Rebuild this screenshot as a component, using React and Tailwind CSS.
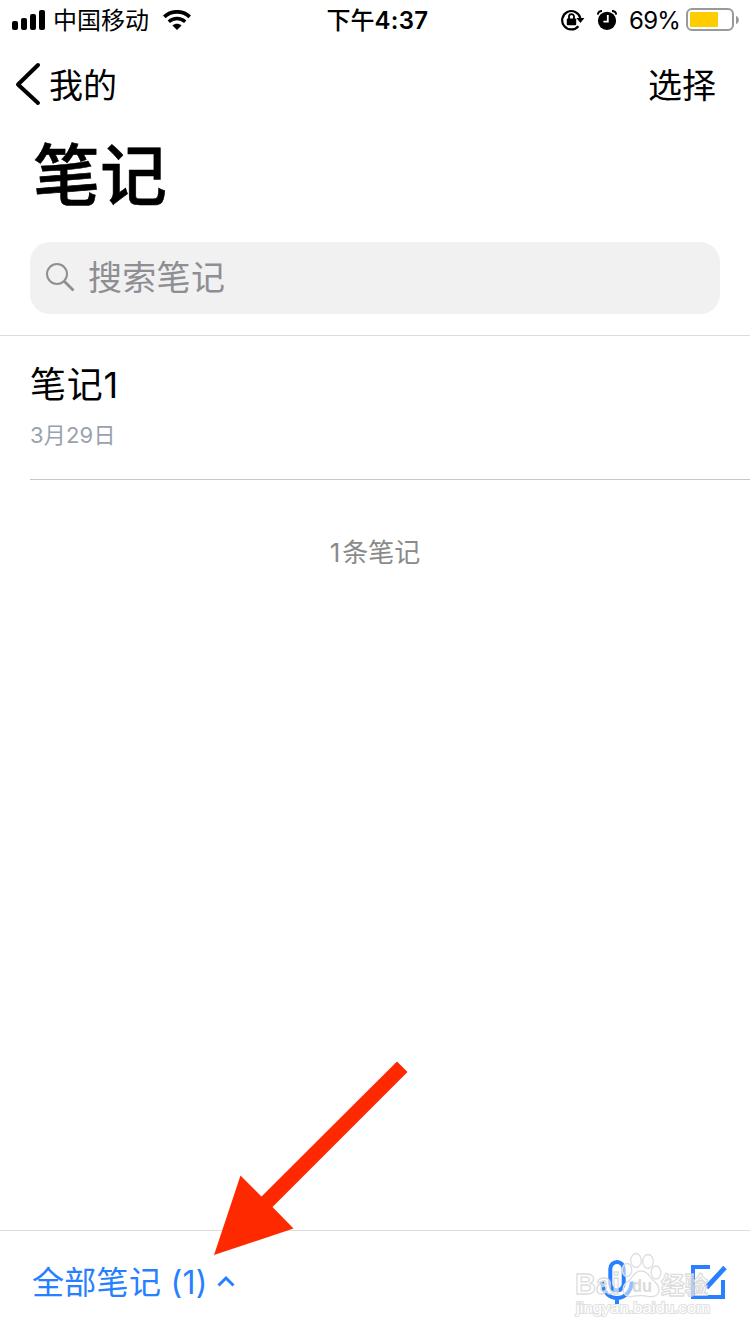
import React, { useState } from "react";

const notesMock = [{ id: 1, title: "笔记1", date: "3月29日" }];

const StatusBar = () => {
  return (
    <div className="h-10 shrink-0 pt-px flex flex-row items-center justify-between pl-3 pr-[11px] text-2xl leading-10">
      <div className="w-[280px] flex flex-row items-center">
        <svg width="33" height="20" viewBox="0 0 33 20" className="shrink-0 mb-0.5">
          <rect x="0" y="11" width="6" height="9" rx="2" />
          <rect x="9" y="8" width="6" height="12" rx="2" />
          <rect x="18" y="4" width="6" height="16" rx="2" />
          <rect x="27" y="0" width="6" height="20" rx="2" />
        </svg>
        <span className="ml-2">中国移动</span>
        <svg width="28" height="20" viewBox="0 0 28 20" className="ml-[14px] mb-0.5">
          <path d="M1.3 6.8C8.5 0.2 19.5 0.2 26.7 6.8" fill="none" stroke="black" strokeWidth="3.8" />
          <path d="M5.8 11.8C10.6 7.4 17.4 7.4 22.2 11.8" fill="none" stroke="black" strokeWidth="3.4" />
          <path d="M14 20L9.4 15.6C12 13 16 13 18.6 15.6Z" />
        </svg>
      </div>
      <div className="ml-1 font-semibold tracking-[0.3px]">
        <span className="font-medium tracking-normal">下午</span>4:37
      </div>
      <div className="w-[280px] flex flex-row items-center justify-end">
        <svg width="24" height="22" viewBox="0 0 24 22" className="mr-3 mb-px">
          <path d="M17.4 17.2A9.2 9.2 0 1 1 19.3 9" fill="none" stroke="black" strokeWidth="2.2" />
          <path d="M15.4 9H23.4L19.4 14Z" />
          <rect x="5.8" y="9.4" width="9.4" height="6.8" rx="1" />
          <path d="M8 10.4V7.6a2.5 2.5 0 0 1 5 0V10.4" fill="none" stroke="black" strokeWidth="1.8" />
        </svg>
        <svg width="20" height="20" viewBox="0 0 20 20" className="mr-3 mb-0.5">
          <circle cx="10" cy="10.8" r="9.1" />
          <path d="M10.8 5V11.6H6.4" fill="none" stroke="white" strokeWidth="1.8" />
          <path d="M0.8 4.6C1 2.4 2.6 1 5 0.9M19.2 4.6C19 2.4 17.4 1 15 0.9" fill="none" stroke="black" strokeWidth="2" />
        </svg>
        <span className="tracking-[-0.8px]">69%</span>
        <svg width="53" height="24" viewBox="0 0 53 24" className="ml-1.5 shrink-0 mb-px">
          <rect x="1" y="1" width="46" height="21" rx="5" fill="none" stroke="#999" strokeWidth="2" />
          <rect x="4" y="4" width="28" height="15" rx="1" fill="#ffcc00" />
          <path d="M50 8C53.8 9 53.8 15 50 16Z" fill="#999" />
        </svg>
      </div>
    </div>
  );
};

const NoteItem = ({ title, date }) => {
  return (
    <div className="h-36 ml-[30px] pt-[25px] border-b border-[#c8c8c8] flex flex-col">
      <div className="text-[36px] leading-[48px] tracking-[0.8px]">{title}</div>
      <div className="mt-2.5 text-[22px] leading-8 tracking-[0.2px] text-[#99a1af]">
        {date}
      </div>
    </div>
  );
};

const Arrow = () => {
  return (
    <svg
      className="absolute left-[200px] top-[1050px] pointer-events-none"
      width="220"
      height="220"
      viewBox="0 0 220 220"
    >
      <path
        d="M197 11.5L207.5 22L72.5 157L93.5 178.5L14 205L40.5 125.5L61.5 146.5Z"
        fill="#ff2900"
      />
    </svg>
  );
};

const Watermark = () => {
  return (
    <svg
      className="absolute left-[570px] top-[1248px] pointer-events-none font-['Liberation_Sans','Noto_Sans_CJK_SC',sans-serif]"
      width="150"
      height="76"
      viewBox="0 0 150 76"
    >
      <g fill="white" fillOpacity="0.5" stroke="#dedede" strokeWidth="1.3">
        <ellipse cx="66" cy="12.5" rx="5.3" ry="7" />
        <ellipse cx="78" cy="13.5" rx="5.3" ry="7" />
        <ellipse cx="57" cy="22" rx="4.8" ry="6.5" />
        <ellipse cx="86" cy="24.5" rx="4.8" ry="6.5" />
        <path d="M71 23C63 23 63 31 57 34C50 40 53 49 61 48.5C65 48 67 47.5 71 47.5C75 47.5 79 49 83 48.5C91 47 90 39 85 34C79 30 79 23 71 23Z" />
      </g>
      <g fontWeight="700">
        <g fill="white" fillOpacity="0.6" stroke="#d4d4d4" strokeOpacity="0.8" strokeWidth="1.3">
          <text x="5" y="45.5" fontSize="29" textLength="45" lengthAdjust="spacingAndGlyphs">Bai</text>
          <text x="91" y="45.5" fontSize="24" textLength="47" lengthAdjust="spacingAndGlyphs">经验</text>
        </g>
        <text x="62" y="44" fontSize="18" textLength="20" lengthAdjust="spacingAndGlyphs" fill="#dadada">du</text>
      </g>
      <text
        x="6"
        y="64.5"
        fontSize="15.5"
        textLength="134"
        lengthAdjust="spacingAndGlyphs"
        fill="white"
        stroke="#e0e0e0"
        strokeWidth="2"
        paintOrder="stroke"
      >
        jingyan.baidu.com
      </text>
    </svg>
  );
};

const App = () => {
  const [notes] = useState(notesMock);
  const [search, setSearch] = useState("");

  return (
    <div className="relative w-[750px] h-[1334px] overflow-hidden bg-white text-black flex flex-col font-[Inter,'Noto_Sans_CJK_SC',sans-serif]">
      <StatusBar />
      <div className="h-[88px] shrink-0 flex flex-row items-center justify-between pl-[15px] pr-[34px] text-[34px]">
        <div className="flex flex-row items-center cursor-pointer">
          <svg width="26" height="44" viewBox="0 0 26 44" fill="none" stroke="black" strokeWidth="4" strokeLinecap="round" strokeLinejoin="round">
            <path d="M23 3L3 22.5L23 41" />
          </svg>
          <span className="ml-2 pt-0.5">我的</span>
        </div>
        <div className="pt-0.5 cursor-pointer">选择</div>
      </div>
      <div className="h-[114px] shrink-0 pl-[33px] pt-0.5 text-[67px] leading-[92px] font-medium [-webkit-text-stroke:0.6px_black]">
        笔记
      </div>
      <div className="h-[94px] shrink-0 px-[30px] border-b border-[#dcdcdc]">
        <label className="h-[72px] rounded-[20px] bg-[#f1f1f1] flex flex-row items-center pl-4 pb-0.5">
          <svg width="29" height="29" viewBox="0 0 29 29" fill="none" stroke="#8e8e93">
            <circle cx="11" cy="11" r="10" strokeWidth="2" />
            <path d="M18.5 18.5L27.5 27.5" strokeWidth="2.8" />
          </svg>
          <input
            className="ml-[13px] w-[500px] h-12 bg-transparent outline-none text-[34px] tracking-[0.3px] placeholder:text-[#8e8e93]"
            type="text"
            value={search}
            onChange={(e) => setSearch(e.target.value)}
            placeholder="搜索笔记"
          />
        </label>
      </div>
      <div className="flex-1">
        {notes.map((item) => (
          <NoteItem title={item.title} date={item.date} key={item.id} />
        ))}
        <div className="pt-[53px] text-center text-[26px] leading-10 text-[#8a8a8a]">
          <span className="mr-0.5">{notes.length}</span>条笔记
        </div>
      </div>
      <div className="h-[104px] shrink-0 border-t border-[#dcdcdc] flex flex-row items-center justify-between pl-8 pr-[22px]">
        <div className="flex flex-row items-center text-[32px] text-[#2680ff] cursor-pointer">
          <span className="tracking-[0.3px]">全部笔记 ({notes.length})</span>
          <svg width="18" height="12" viewBox="0 0 18 12" className="ml-[9px] mb-[3px]" fill="none" stroke="#2680ff" strokeWidth="3">
            <path d="M1.5 10.5L9 3L16.5 10.5" />
          </svg>
        </div>
        <div className="flex flex-row items-center gap-[54px]">
          <svg width="36" height="45" viewBox="0 0 36 45" fill="none" stroke="#2680ff" strokeWidth="4">
            <rect x="10.3" y="2" width="13.4" height="28.5" rx="6.7" />
            <path d="M2.2 21.5C3 43.5 31 43.5 31.8 21.5M17 38V44" />
          </svg>
          <svg width="38" height="39" viewBox="0 0 38 39" fill="none" stroke="#2680ff" strokeWidth="4">
            <path d="M20 4H3V34H33V17" />
            <path d="M16.5 24.5L35 4.5" strokeWidth="4.8" />
          </svg>
        </div>
      </div>
      <Arrow />
      <Watermark />
    </div>
  );
};

export default App;
